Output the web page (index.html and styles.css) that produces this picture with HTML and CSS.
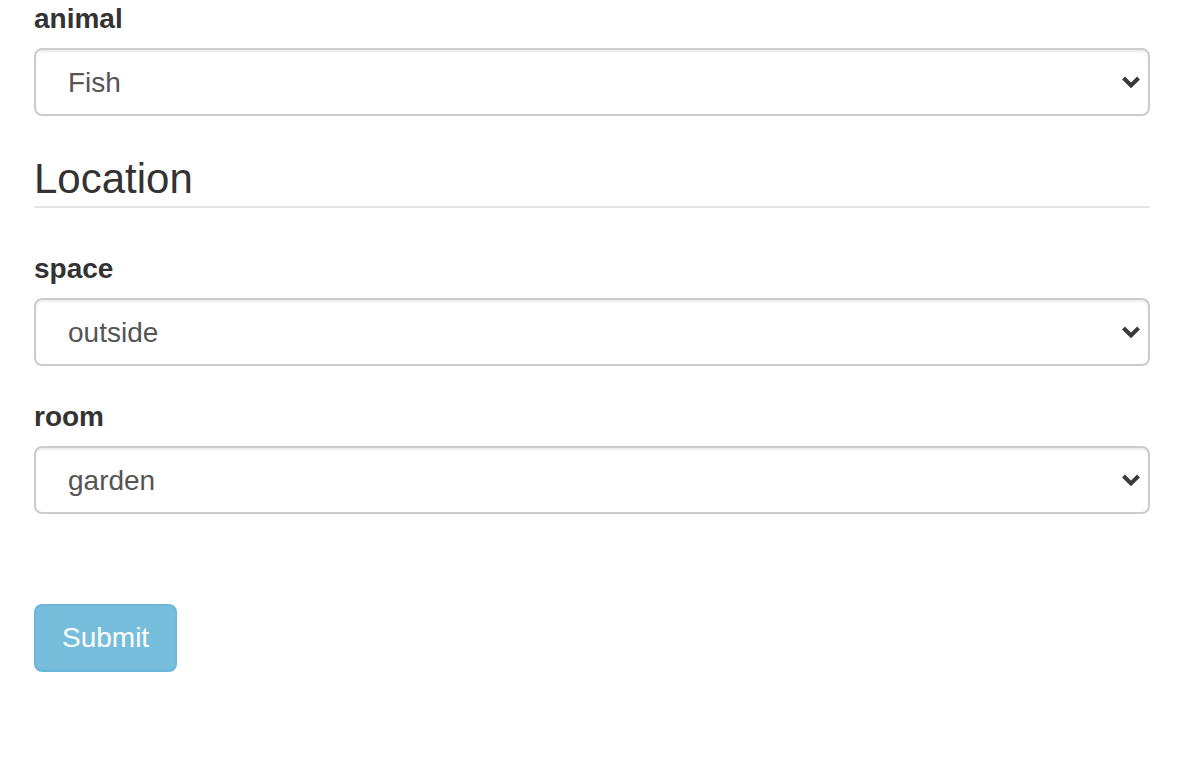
FILE: index.html
```html
<!DOCTYPE html>
<html lang="en">
<head>
  <meta charset="UTF-8" />
  <meta name="viewport" content="width=device-width, initial-scale=1.0"/>
  <title>Form</title>
  <link rel="stylesheet" href="styles.css">
</head>
<body>
  <main class="container">
    <form class="formulario">
      <div class="form-group">
        <label for="animal">animal</label>
        <div class="select-wrap">
          <select id="animal" class="form-control">
            <option>Fish</option>
            <option>Cat</option>
            <option>Dog</option>
          </select>
          <svg class="chevron" width="20" height="14" viewBox="0 0 20 14"><path d="M2.5 3 L10 10.5 L17.5 3" fill="none" stroke="#3a3a3a" stroke-width="4"/></svg>
        </div>
      </div>

      <fieldset>
        <legend>Location</legend>

        <div class="form-group">
          <label for="space">space</label>
          <div class="select-wrap">
            <select id="space" class="form-control">
              <option>outside</option>
              <option>inside</option>
            </select>
            <svg class="chevron" width="20" height="14" viewBox="0 0 20 14"><path d="M2.5 3 L10 10.5 L17.5 3" fill="none" stroke="#3a3a3a" stroke-width="4"/></svg>
          </div>
        </div>

        <div class="form-group">
          <label for="room">room</label>
          <div class="select-wrap">
            <select id="room" class="form-control">
              <option>garden</option>
              <option>kitchen</option>
            </select>
            <svg class="chevron" width="20" height="14" viewBox="0 0 20 14"><path d="M2.5 3 L10 10.5 L17.5 3" fill="none" stroke="#3a3a3a" stroke-width="4"/></svg>
          </div>
        </div>
      </fieldset>

      <div class="acciones">
        <button type="submit" class="btn" disabled>Submit</button>
      </div>
    </form>
  </main>
</body>
</html>
```

FILE: styles.css
```css
body {
  font-family: "Liberation Sans", Arial, sans-serif;
  font-size: 28px;
  line-height: 40px;
  color: #333;
  background: #fff;
  margin: 0;
  padding: 0;
}
.container {
  padding: 0 34px;
}
.formulario {
  margin-top: -2px;
}
.form-group {
  margin-bottom: 30px;
}
label {
  display: block;
  font-weight: bold;
  padding-top: 1px;
  line-height: 39px;
  margin-bottom: 10px;
}
.select-wrap {
  position: relative;
}
.form-control {
  display: block;
  width: 100%;
  height: 68px;
  box-sizing: border-box;
  padding: 0 60px 0 32px;
  font-family: inherit;
  font-size: 28px;
  color: #555;
  background: #fff;
  border: 2px solid #ccc;
  border-radius: 8px;
  box-shadow: inset 0 2px 2px rgba(0,0,0,0.075);
  appearance: none;
  -webkit-appearance: none;
}
.chevron {
  position: absolute;
  right: 9px;
  top: 27px;
  pointer-events: none;
}
fieldset {
  border: 0;
  margin: 0;
  padding: 0;
  min-width: 0;
}
legend {
  display: block;
  width: 100%;
  padding: 6px 0 0;
  margin-bottom: 40px;
  font-size: 42px;
  line-height: 54px;
  color: #333;
  border-bottom: 2px solid #e5e5e5;
}
.acciones {
  padding-top: 60px;
}
.btn {
  height: 68px;
  padding: 0 26px;
  font-family: inherit;
  font-size: 28px;
  color: #fff;
  background-color: #77bddc;
  border: 2px solid #6cb6d8;
  border-radius: 8px;
}
```
